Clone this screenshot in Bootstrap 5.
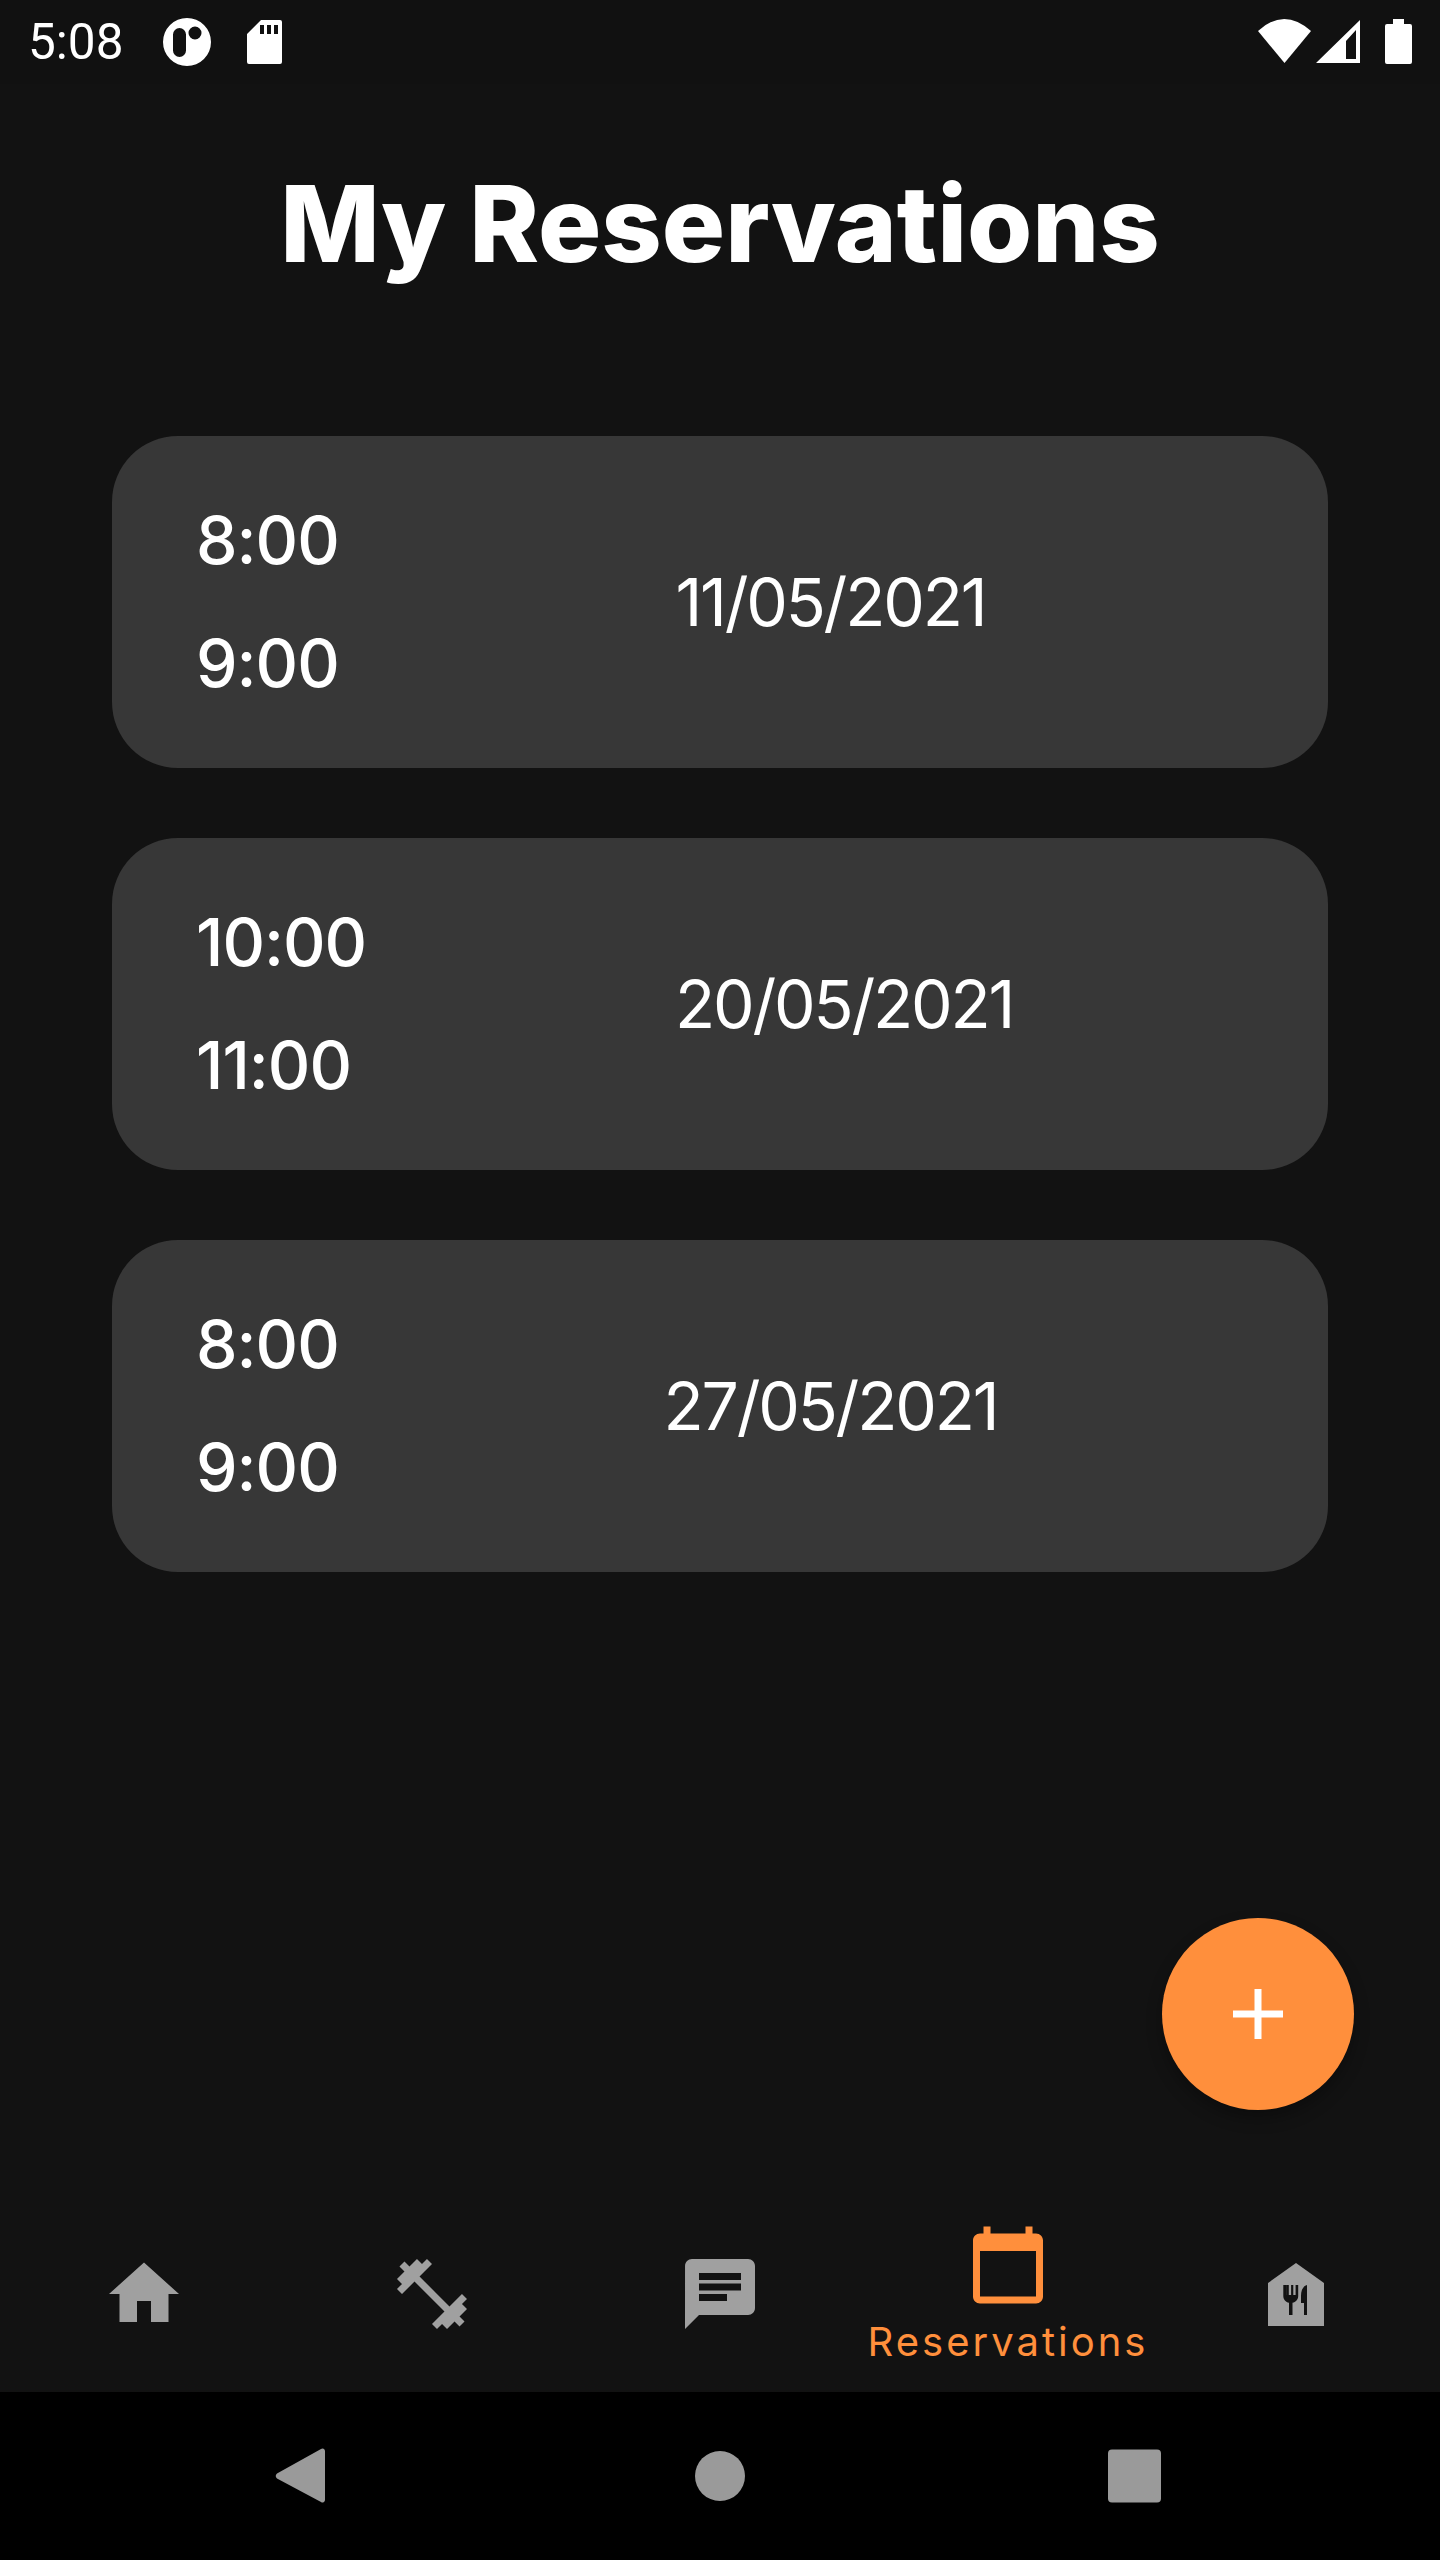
<!DOCTYPE html>
<html lang="en">
<head>
    <meta charset="UTF-8">
    <meta name="viewport" content="width=device-width, initial-scale=1.0">
    <title>My Reservations</title>
    <link href="https://cdn.jsdelivr.net/npm/bootstrap@5.3.3/dist/css/bootstrap.min.css" rel="stylesheet">
    <script src="https://cdn.jsdelivr.net/npm/bootstrap@5.3.3/dist/js/bootstrap.bundle.min.js"></script>
    <style>
        body {
            background-color: #121212;
            color: #fff;
            font-family: Inter, "Liberation Sans", sans-serif;
        }

        .appScreen {
            width: 1440px;
            height: 2560px;
        }

        .statusBar {
            height: 84px;
            flex-shrink: 0;
            background-color: #111;
        }

        .statusBar svg {
            display: block;
            position: absolute;
            top: 0;
        }

        .statusTime {
            position: absolute;
            left: 28px;
            top: 14px;
            font: 400 49.500px/56px Roboto, sans-serif;
        }

        .pageTitle {
            font-size: 105.500px;
            font-weight: 800;
            line-height: 130px;
            margin: 75px 0 0;
            text-align: center;
        }

        .bookingList {
            margin: 147px 112px 0 112px;
            gap: 70px;
        }

        .bookingCard {
            height: 332px;
            background-color: #373737;
            border-radius: 66px;
        }

        .timeCol {
            padding-left: 84px;
            font-size: 66px;
            font-weight: 500;
            line-height: 123px;
            letter-spacing: -1px;
        }

        .dateCol {
            padding-right: 6px;
            font-size: 66px;
            font-weight: 400;
            line-height: 80px;
            letter-spacing: -2.200px;
        }

        .addBtn {
            position: absolute;
            left: 1162px;
            top: 1918px;
            width: 192px;
            height: 192px;
            border: 0;
            border-radius: 50%;
            background-color: #ff8f3c;
            box-shadow: 0 8px 16px rgba(0, 0, 0, .3);
        }

        .bottomTabs {
            height: 196px;
            flex-shrink: 0;
        }

        .tabItem {
            width: 288px;
            fill: #a0a0a0;
        }

        .tabItem.activeTab {
            fill: #ff8f3c;
            color: #ff8f3c;
            padding-top: 27px;
            justify-content: flex-start !important;
        }

        .tabLabel {
            font-size: 40px;
            line-height: 48px;
            letter-spacing: 3px;
            margin-top: 11px;
        }

        .systemNav {
            height: 168px;
            flex-shrink: 0;
            background-color: #000;
            fill: #9a9a9a;
        }

        .systemNav svg {
            position: absolute;
            left: 0;
            top: 0;
        }
    </style>
</head>
<body class="m-0">
<div class="appScreen position-relative d-flex flex-column overflow-hidden">
    <div class="statusBar position-relative">
        <span class="statusTime">5:08</span>
        <svg width="1440" height="84" viewBox="0 0 1440 84" fill="#fff">
            <path fill-rule="evenodd" d="M187 18a24 24 0 1 0 0 48a24 24 0 1 0 0-48zM179.500 28a6.500 6.500 0 0 1 6.500 6.500v16a6.500 6.500 0 0 1-13 0v-16a6.500 6.500 0 0 1 6.500-6.500zM195 26.500a6.500 6.500 0 1 1 0 13a6.500 6.500 0 1 1 0-13z"/>
            <path fill-rule="evenodd" d="M261 20h19a2 2 0 0 1 2 2v40a2 2 0 0 1-2 2h-31a2 2 0 0 1-2-2v-28zM260 25v9h4v-9zM267 25v9h4v-9zM274 25v9h4v-9z"/>
            <path d="M1258 31Q1284 7 1311 31L1284.500 63z"/>
            <path fill-rule="evenodd" d="M1360 20v43h-44zM1356 30l-10 11v18h10z"/>
            <path d="M1393 19h11v5h6a2 2 0 0 1 2 2v36a2 2 0 0 1-2 2h-23a2 2 0 0 1-2-2v-36a2 2 0 0 1 2-2h6z"/>
        </svg>
    </div>

    <h1 class="pageTitle">My Reservations</h1>

    <div class="bookingList d-flex flex-column">
        <div class="bookingCard d-flex align-items-center">
            <div class="timeCol">
                <div>8:00</div>
                <div>9:00</div>
            </div>
            <div class="dateCol flex-grow-1 text-center">11/05/2021</div>
        </div>
        <div class="bookingCard d-flex align-items-center">
            <div class="timeCol">
                <div>10:00</div>
                <div>11:00</div>
            </div>
            <div class="dateCol flex-grow-1 text-center">20/05/2021</div>
        </div>
        <div class="bookingCard d-flex align-items-center">
            <div class="timeCol">
                <div>8:00</div>
                <div>9:00</div>
            </div>
            <div class="dateCol flex-grow-1 text-center">27/05/2021</div>
        </div>
    </div>

    <button class="addBtn d-flex align-items-center justify-content-center p-0" type="button" aria-label="Add reservation">
        <svg width="50" height="50" viewBox="0 0 50 50" fill="#fff"><path d="M21.500 0h7v21.500H50v7H28.500V50h-7V28.500H0v-7h21.500z"/></svg>
    </button>

    <nav class="bottomTabs d-flex mt-auto">
        <div class="tabItem d-flex flex-column align-items-center justify-content-center">
            <svg width="84" height="84" viewBox="0 0 24 24"><path d="M10 20v-6h4v6h5v-8h3L12 3 2 12h3v8z"/></svg>
        </div>
        <div class="tabItem d-flex flex-column align-items-center justify-content-center">
            <svg width="84" height="84" viewBox="0 0 24 24"><path d="M20.570 14.860L22 13.430 20.570 12 17 15.570 8.430 7 12 3.430 10.570 2 9.140 3.430 7.710 2 5.570 4.140 4.140 2.710 2.710 4.140l1.430 1.430L2 7.710l1.430 1.430L2 10.570 3.430 12 7 8.430 15.570 17 12 20.570 13.430 22l1.430-1.430L16.290 22l2.140-2.140 1.430 1.430 1.430-1.430-1.430-1.430L22 16.290z"/></svg>
        </div>
        <div class="tabItem d-flex flex-column align-items-center justify-content-center">
            <svg width="84" height="84" viewBox="0 0 24 24"><path d="M20 2H4c-1.100 0-1.990.9-1.990 2L2 22l4-4h14c1.100 0 2-.9 2-2V4c0-1.100-.9-2-2-2zM6 9h12v2H6V9zm8 5H6v-2h8v2zm4-6H6V6h12v2z"/></svg>
        </div>
        <div class="tabItem activeTab d-flex flex-column align-items-center">
            <svg width="84" height="84" viewBox="0 0 24 24"><path d="M20 3h-1V1h-2v2H7V1H5v2H4c-1.100 0-2 .9-2 2v16c0 1.100.9 2 2 2h16c1.100 0 2-.9 2-2V5c0-1.100-.9-2-2-2zm0 18H4V8h16v13z"/></svg>
            <span class="tabLabel">Reservations</span>
        </div>
        <div class="tabItem d-flex flex-column align-items-center justify-content-center">
            <svg width="56" height="63" viewBox="0 0 56 63">
                <path fill-rule="evenodd" d="M28 0L56 20V63H0V20zM15.300 22v11c0 3.400 2.500 6.200 5.700 6.800V52h3.500V39.800c3.200-.6 5.700-3.400 5.700-6.800V22h-2.600v10h-2.300V22h-2.200v10h-2.300V22h-2.300v10h-.1V22zM39 22c-3.800 1-6 5-6 11v7h3V52h3z"/>
            </svg>
        </div>
    </nav>

    <div class="systemNav position-relative">
        <svg width="1440" height="168" viewBox="0 0 1440 168">
            <path d="M321 57a2.500 2.500 0 0 1 4 2v49a2.500 2.500 0 0 1-4 2L277 86.500a3.500 3.500 0 0 1 0-5z"/>
            <circle cx="720" cy="84" r="25"/>
            <rect x="1108" y="57.500" width="53" height="53" rx="4"/>
        </svg>
    </div>
</div>
</body>
</html>
